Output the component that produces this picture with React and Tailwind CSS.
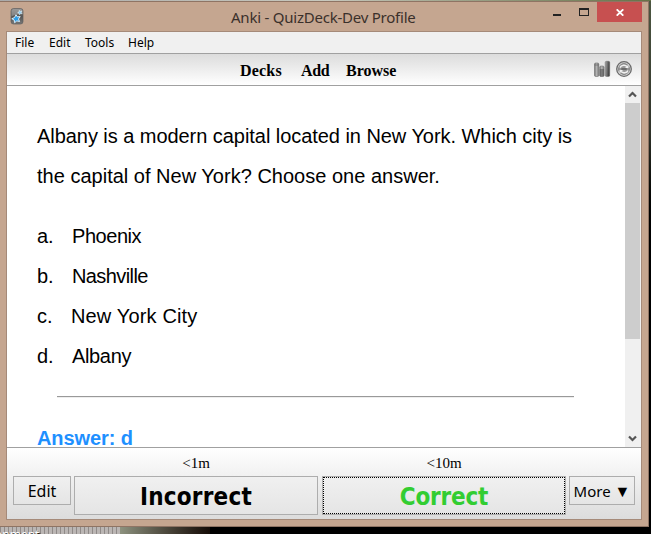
const sans = "font-['Noto_Sans','Open_Sans',sans-serif]";
const tahoma = "font-['DejaVu_Sans_Condensed','DejaVu_Sans',sans-serif]";
const serif = "font-['Liberation_Serif',serif]";

function AnkiIcon() {
  return (
    <svg width="14" height="18" viewBox="0 0 14 18">
      <defs>
        <linearGradient id="box" x1="0" y1="0" x2="0" y2="1">
          <stop offset="0" stopColor="#858585" />
          <stop offset="0.5" stopColor="#555" />
          <stop offset="1" stopColor="#777" />
        </linearGradient>
      </defs>
      <rect x="1" y="1.5" width="12" height="15.5" rx="2.5" fill="url(#box)" stroke="#606060" strokeWidth="0.7" />
      <path d="M1.5 9.5 C5 7 8 8 12.5 6 V3.5 L11 2 H3 L1.5 3.5Z" fill="#aaa" opacity=".55" />
      <path d="M6 7.7l1.3 2.1 2.9-.2-1.7 2.4 1.1 2.5-2.8-.6-2.2 1.8-.4-2.7-2.4-1.3 2.7-1.1z" fill="#2d9de8" stroke="#e5f5ff" strokeWidth="0.9" />
      <path d="M9.3 3.3l.8 1.1 1.7-.5-.6 1.6 1 1.2-1.7-.1-1 1.2-.4-1.5-1.5-.5 1.4-.8z" fill="#8bcdf5" stroke="#eefaff" strokeWidth="0.5" />
    </svg>
  );
}

function StatsIcon() {
  return (
    <svg width="18" height="18" viewBox="0 0 18 18">
      <defs>
        <linearGradient id="bar" x1="0" y1="0" x2="1" y2="0">
          <stop offset="0" stopColor="#707070" />
          <stop offset="0.45" stopColor="#b5b5b5" />
          <stop offset="1" stopColor="#777" />
        </linearGradient>
        <linearGradient id="barDark" x1="0" y1="0" x2="1" y2="0.2">
          <stop offset="0" stopColor="#aaa" />
          <stop offset="1" stopColor="#3a3a3a" />
        </linearGradient>
      </defs>
      <rect x="1.5" y="3" width="4.3" height="13.5" rx="1.3" fill="url(#bar)" stroke="#6d6d6d" strokeWidth="0.6" />
      <path d="M1.7 5h4" stroke="#666" strokeWidth="0.7" />
      <rect x="6.7" y="6" width="4.4" height="10.5" rx="1.3" fill="url(#bar)" stroke="#777" strokeWidth="0.6" />
      <path d="M6.7 9h4.4v6.2a1.3 1.3 0 0 1-1.3 1.3H8a1.3 1.3 0 0 1-1.3-1.3z" fill="#505050" opacity=".55" />
      <rect x="12.2" y="1.3" width="4.5" height="15.2" rx="1.3" fill="url(#barDark)" stroke="#666" strokeWidth="0.5" />
    </svg>
  );
}

function SyncIcon() {
  return (
    <svg width="18" height="18" viewBox="0 0 18 18" fill="none">
      <circle cx="9" cy="9" r="7.3" fill="#d8d8d8" stroke="#6a6a6a" strokeWidth="1.3" />
      <circle cx="9" cy="9" r="5.4" fill="#999" stroke="#777" strokeWidth="0.9" />
      <path d="M5 7.6C6.2 4.7 10.5 4.5 12 6.6M13 10.4c-1 2.9-5.3 3.2-6.9 1" stroke="#efefef" strokeWidth="1.6" />
      <path d="M10 8h3.5V4.6zM8 10H4.5v3.4z" fill="#efefef" />
      <path d="M6.3 9h5.4" stroke="#666" strokeWidth="1.8" />
    </svg>
  );
}

function Chevron({ up }) {
  return (
    <svg width="9" height="7" viewBox="0 0 9 7" className={up ? "" : "rotate-180"}>
      <path d="M1 5.5 L4.5 2 L8 5.5" fill="none" stroke="#555" strokeWidth="2.2" />
    </svg>
  );
}

const choices = [
  { key: "a.", city: "Phoenix", spacing: "tracking-[-0.45px]" },
  { key: "b.", city: "Nashville", spacing: "tracking-[-0.6px]" },
  { key: "c.", city: "New York City", spacing: "-ml-px tracking-[0.15px]" },
  { key: "d.", city: "Albany", spacing: "tracking-[-0.35px]" },
];

function TitleBar() {
  return (
    <header className="flex h-[29px] shrink-0 items-start pl-[10px]">
      <div className="mt-[5px] h-[18px] w-[14px]"><AnkiIcon /></div>
      <h1 className={`ml-[207px] mt-[5px] w-[310px] whitespace-nowrap text-[15px] leading-5 tracking-[-0.23px] text-[#3a302b] ${sans}`}>
        Anki - QuizDeck-Dev Profile
      </h1>
      <div className="ml-[12px] mt-[12px] h-[2px] w-2 bg-[#222]" />
      <div className="ml-[18px] mt-[6px] h-2 w-[10px] border border-t-2 border-[#222]" />
      <div className="ml-2 flex h-5 w-[45px] items-center justify-center bg-[#c75050]">
        <svg width="8" height="7" viewBox="0 0 8 7"><path d="M.7 0.3l6.6 6.4M7.3.3L.7 6.7" stroke="white" strokeWidth="1.8" /></svg>
      </div>
    </header>
  );
}

function Content() {
  return (
    <main className="flex h-[361px] shrink-0 overflow-hidden bg-white">
      <div className="w-[618px] overflow-hidden pl-[30px] pt-[30px] font-['Liberation_Sans',Arial,sans-serif] text-[20px] leading-10 text-black">
        <p className="whitespace-nowrap tracking-[-0.05px]">Albany is a modern capital located in New York. Which city is</p>
        <p className="whitespace-nowrap tracking-[0.01px]">the capital of New York? Choose one answer.</p>
        <ul className="mt-5">
          {choices.map(({ key, city, spacing }) => (
            <li key={key} className="flex">
              <span className="w-[35px]">{key}</span>
              <span className={`whitespace-nowrap ${spacing}`}>{city}</span>
            </li>
          ))}
        </ul>
        <hr className="ml-5 mt-5 h-[2px] w-[517px] border-0 border-t border-[#999] bg-[#eee]" />
        <p className="mt-[31px] whitespace-nowrap font-bold leading-[18px] tracking-[-0.1px] text-[#1e90ff]">Answer: d</p>
      </div>
      <div className="flex w-4 flex-col bg-[#f0f0f0]">
        <div className="flex h-[17px] w-[15px] shrink-0 items-center justify-center"><Chevron up /></div>
        <div className="h-[236px] w-[15px] shrink-0 bg-[#cdcdcd]" />
        <div className="mt-auto flex h-[17px] w-[15px] items-center justify-center"><Chevron /></div>
      </div>
    </main>
  );
}

function AnswerBar() {
  const button = "border border-[#adadad] bg-linear-to-b from-[#f0f0f0] to-[#e5e5e5] text-black whitespace-nowrap";
  return (
    <footer className="flex h-[72px] shrink-0 items-start border-t border-[#a0a0a0] bg-linear-to-b from-white to-[#dcdcdc] pl-[6px]">
      <button className={`mt-[28px] h-[29px] w-[58px] text-[16px] ${sans} ${button}`}>Edit</button>
      <div className="ml-[3px] flex w-[244px] flex-col">
        <span className={`h-[28px] pt-[5px] text-center text-[15px] leading-5 ${serif}`}>&lt;1m</span>
        <button className={`h-[39px] pt-[2px] text-[24px] font-bold tracking-[0.2px] ${tahoma} ${button}`}>Incorrect</button>
      </div>
      <div className="ml-1 flex w-[244px] flex-col">
        <span className={`h-[28px] pt-[5px] text-center text-[15px] leading-5 ${serif}`}>&lt;10m</span>
        <button className={`h-[39px] p-0 text-[24px] font-bold tracking-[-0.2px] ${tahoma} ${button}`}>
          <span className="flex h-full items-center justify-center border border-dotted border-black pt-[2px] text-[#32cd32]">Correct</span>
        </button>
      </div>
      <button className={`ml-[3px] mt-[28px] h-[29px] w-[66px] text-[15px] ${sans} ${button}`}>
        More <span className="text-[16px]">▼</span>
      </button>
    </footer>
  );
}

export default function App() {
  return (
    <div className="h-[534px] w-[651px] overflow-hidden bg-black">
      <div className="h-px bg-linear-to-r from-[#aaa] via-[#c8c8bd] to-[#667247]" />
      <div className="flex h-[526px]">
        <div className="flex w-[649px] flex-col border-b border-r border-t border-[#8f7464] bg-[#c5a690]">
          <TitleBar />
          <div className="ml-[6px] h-[489px] w-[636px] border border-[#a58a79] bg-[#f0f0f0]">
            <nav className={`flex h-[21px] gap-4 pl-2 text-[12px] leading-[21px] text-black ${sans}`}>
              <span className="w-[18px]">File</span>
              <span className="w-[20px]">Edit</span>
              <span className="w-[27px]">Tools</span>
              <span>Help</span>
            </nav>
            <div className="flex h-[33px] items-center border-y border-[#a0a0a0] bg-linear-to-b from-[#dcdcdc] to-white">
              <div className={`ml-[233px] flex w-[353px] pt-[3px] text-[16px] font-bold text-black ${serif}`}>
                <span className="w-[61px] tracking-[0.2px]">Decks</span>
                <span className="w-[45px] tracking-[-0.3px]">Add</span>
                <span>Browse</span>
              </div>
              <div className="flex gap-1 pb-px"><StatsIcon /><SyncIcon /></div>
            </div>
            <Content />
            <AnswerBar />
          </div>
        </div>
        <div className="w-[2px] bg-linear-to-b from-[#4d5742] via-[#30332a] via-25% to-black to-45%" />
      </div>
      <div className="flex h-[7px] overflow-hidden">
        <div className="h-full w-[120px] bg-[#aaa5a3] bg-[repeating-linear-gradient(90deg,#8f8a88_0_1px,#bbb6b4_1px_4px)]">
          <span className={`-ml-[5px] block text-[12px] leading-[16px] text-white [text-shadow:1px_1px_1px_#000] ${sans}`}>onment</span>
        </div>
        <div className="w-[90px] bg-linear-to-r from-[#8d927f] to-[#160d08]" />
      </div>
    </div>
  );
}
